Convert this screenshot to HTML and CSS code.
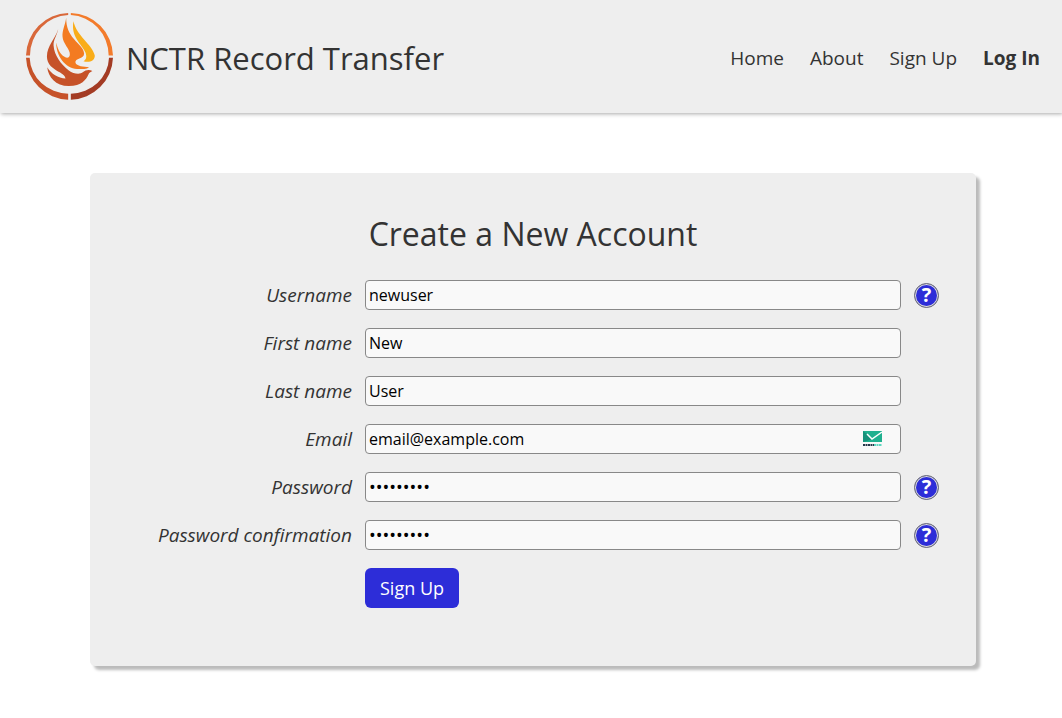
FILE: index.html
```
<!DOCTYPE html>
<html lang="en">
<head>
  <meta charset="UTF-8">
  <meta name="viewport" content="width=device-width, initial-scale=1.0">
  <title>Create a New Account</title>
  <link rel="stylesheet" href="styles.css">
</head>
<body>

  <header class="site-header">
    <a href="#" class="brand">
      <svg class="logo" viewBox="33 24 262 262" aria-hidden="true">
        <!-- ring -->
        <path fill="#d9683a" d="M33 152A131 131 0 0 1 160 24V30A120 123 0 0 0 45 152Z"/>
        <path fill="#f37b2b" d="M168 24A131 131 0 0 1 295 152H282A120 123 0 0 0 168 30Z"/>
        <path fill="#c65229" d="M33 159A131 131 0 0 0 160 285V267A118 112 0 0 1 44 159Z"/>
        <path fill="#a33b24" d="M295 159A131 131 0 0 1 168 285V267A118 112 0 0 0 283 159Z"/>
        <!-- bird and flames -->
        <path fill="#c65229" d="M130 72C122 100 96 122 96 155C96 179 114 191 131 201C145 208 150 213 152 221C130 220 109 207 97 187C100 217 122 243 162 244C201 244 214 224 221 209C223 204 227 202 233 199C223 193 212 196 205 202C194 211 176 207 162 197C138 178 118 152 116 122C115 105 126 92 130 72Z"/>
        <path fill="#f37b21" d="M154 38C151 60 142 76 143 95C144 117 167 134 165 150C164 159 157 161 149 156C135 148 128 132 124 113C123 152 151 191 187 193C203 193 216 193 223 187C207 187 185 184 182 174C179 159 208 164 208 147C208 131 191 119 178 103C162 84 154 66 154 38Z"/>
        <path fill="#f9ad19" d="M176 49C184 91 232 119 240 151C242 168 222 175 206 169C216 164 216 154 212 143C201 117 167 96 176 49Z"/>
      </svg>
      <span class="site-title">NCTR Record Transfer</span>
    </a>
    <nav class="site-nav">
      <a href="#">Home</a>
      <a href="#">About</a>
      <a href="#">Sign Up</a>
      <a href="#" class="active">Log In</a>
    </nav>
  </header>

  <main class="card">
    <h1 class="card-title">Create a New Account</h1>
    <form class="signup-form">
      <div class="form-row">
        <label for="username">Username</label>
        <input type="text" id="username" value="newuser">
        <button type="button" class="help" aria-label="Username help">?</button>
      </div>
      <div class="form-row">
        <label for="first-name">First name</label>
        <input type="text" id="first-name" value="New">
      </div>
      <div class="form-row">
        <label for="last-name">Last name</label>
        <input type="text" id="last-name" value="User">
      </div>
      <div class="form-row">
        <label for="email">Email</label>
        <div class="email-field">
          <input type="email" id="email" value="email@example.com">
          <svg class="mail-icon" viewBox="0 0 20 16" aria-hidden="true">
            <path fill="#20b08f" d="M0 0H19V11H0Z"/>
            <path fill="#16917a" d="M0 0L10 8L0 11Z"/>
            <path fill="none" stroke="#fff" stroke-width="1.5" d="M4 3L9 8L19 1"/>
            <path stroke="#26384a" stroke-width="2" stroke-dasharray="2 .5" d="M0 14H11"/>
            <path stroke="#5fd6c0" stroke-width="2" stroke-dasharray="2 .5" d="M11 14H19"/>
          </svg>
        </div>
      </div>
      <div class="form-row">
        <label for="password">Password</label>
        <input type="password" id="password" value="password1">
        <button type="button" class="help" aria-label="Password help">?</button>
      </div>
      <div class="form-row">
        <label for="password-confirm">Password confirmation</label>
        <input type="password" id="password-confirm" value="password1">
        <button type="button" class="help" aria-label="Password confirmation help">?</button>
      </div>
      <div class="form-row">
        <button type="submit" class="submit">Sign Up</button>
      </div>
    </form>
  </main>

</body>
</html>
```
FILE: styles.css
```
* {
  box-sizing: border-box;
}

body {
  margin: 0;
  font-family: "Segoe UI", "Open Sans", "Noto Sans", sans-serif;
  background-color: #fff;
  color: #333;
}

.site-header {
  display: flex;
  justify-content: space-between;
  align-items: center;
  padding: 13px 22px 13px 26px;
  background-color: #eee;
  box-shadow: 1px 1px 4px #aaa;
}

.brand {
  display: flex;
  align-items: center;
  gap: 13px;
  color: #333;
  text-decoration: none;
}

.logo {
  width: 87px;
  height: 87px;
}

.site-title {
  padding-top: 2px;
  font-size: 31px;
  line-height: 40px;
}

.site-nav {
  display: flex;
  gap: 26px;
  padding-top: 2px;
  font-size: 19px;
}

.site-nav a {
  color: #333;
  text-decoration: none;
}

.site-nav .active {
  font-weight: bold;
}

.card {
  margin: 60px 86px 52px 90px;
  padding: 41px 0 58px;
  background-color: #eee;
  border-radius: 5px;
  box-shadow: 4px 4px 3px #bbb;
}

.card-title {
  margin: 0 0 26px;
  font-size: 32px;
  font-weight: normal;
  line-height: 40px;
  text-align: center;
}

.signup-form {
  display: flex;
  flex-direction: column;
  gap: 18px;
}

.form-row {
  display: grid;
  grid-template-columns: 262px 1fr 62px;
  column-gap: 13px;
  align-items: center;
  min-height: 30px;
}

.form-row label {
  font-size: 19px;
  font-style: italic;
  line-height: 30px;
  text-align: right;
}

.form-row input {
  width: 100%;
  height: 30px;
  padding: 1px 3px;
  border: 1px solid #888;
  border-radius: 4px;
  background-color: #f9f9f9;
  color: #000;
  font-family: inherit;
  font-size: 16px;
}

.form-row input[type="password"] {
  font-size: 18px;
}

.email-field {
  position: relative;
  display: flex;
}

.mail-icon {
  position: absolute;
  top: 7px;
  right: 18px;
  width: 20px;
  height: 16px;
}

.help {
  width: 25px;
  height: 25px;
  padding: 0;
  border: 1px solid #777;
  border-radius: 50%;
  background-color: #2d2dd8;
  box-shadow: inset 0 0 0 1px #ddd;
  color: #fff;
  font-family: inherit;
  font-size: 20px;
  font-weight: bold;
  line-height: 22px;
  cursor: pointer;
}

.submit {
  grid-column: 2;
  justify-self: start;
  height: 40px;
  padding: 0 15px;
  border: none;
  border-radius: 6px;
  background-color: #2d2dd8;
  color: #fff;
  font-family: inherit;
  font-size: 18px;
  cursor: pointer;
}
```
